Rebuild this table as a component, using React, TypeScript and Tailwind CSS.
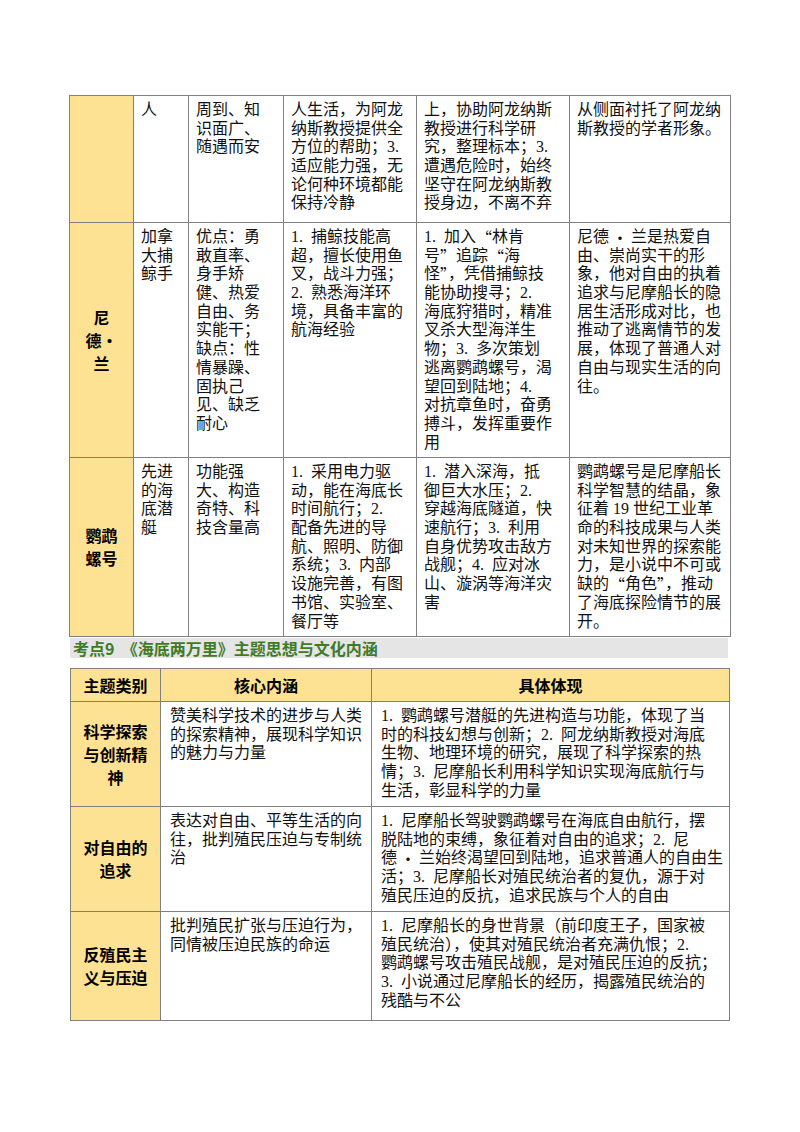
import React from "react";

// 人物形象表（续）与主题思想表
const body = '"Liberation Serif", "Noto Sans CJK SC", serif';
const heavy = '"Noto Sans CJK SC", sans-serif';

type Row = { label: string[]; cells: string[][]; h: string };

const characterRows: Row[] = [
  {
    label: [],
    h: "h-[127px]",
    cells: [
      ["人"],
      ["周到、知", "识面广、", "随遇而安"],
      ["人生活，为阿龙", "纳斯教授提供全", "方位的帮助；3.", "适应能力强，无", "论何种环境都能", "保持冷静"],
      ["上，协助阿龙纳斯", "教授进行科学研", "究，整理标本；3.", "遭遇危险时，始终", "坚守在阿龙纳斯教", "授身边，不离不弃"],
      ["从侧面衬托了阿龙纳", "斯教授的学者形象。"],
    ],
  },
  {
    label: ["尼", "德·", "兰"],
    h: "h-[235px]",
    cells: [
      ["加拿", "大捕", "鲸手"],
      ["优点：勇", "敢直率、", "身手矫", "健、热爱", "自由、务", "实能干；", "缺点：性", "情暴躁、", "固执己", "见、缺乏", "耐心"],
      ["1. 捕鲸技能高", "超，擅长使用鱼", "叉，战斗力强；", "2. 熟悉海洋环", "境，具备丰富的", "航海经验"],
      [
        "1. 加入“林肯",
        "号”追踪“海",
        "怪”，凭借捕鲸技",
        "能协助搜寻；2.",
        "海底狩猎时，精准",
        "叉杀大型海洋生",
        "物；3. 多次策划",
        "逃离鹦鹉螺号，渴",
        "望回到陆地；4.",
        "对抗章鱼时，奋勇",
        "搏斗，发挥重要作",
        "用",
      ],
      ["尼德·兰是热爱自", "由、崇尚实干的形", "象，他对自由的执着", "追求与尼摩船长的隐", "居生活形成对比，也", "推动了逃离情节的发", "展，体现了普通人对", "自由与现实生活的向", "往。"],
    ],
  },
  {
    label: ["鹦鹉", "螺号"],
    h: "h-[179px]",
    cells: [
      ["先进", "的海", "底潜", "艇"],
      ["功能强", "大、构造", "奇特、科", "技含量高"],
      ["1. 采用电力驱", "动，能在海底长", "时间航行；2.", "配备先进的导", "航、照明、防御", "系统；3. 内部", "设施完善，有图", "书馆、实验室、", "餐厅等"],
      ["1. 潜入深海，抵", "御巨大水压；2.", "穿越海底隧道，快", "速航行；3. 利用", "自身优势攻击敌方", "战舰；4. 应对冰", "山、漩涡等海洋灾", "害"],
      ["鹦鹉螺号是尼摩船长", "科学智慧的结晶，象", "征着 19 世纪工业革", "命的科技成果与人类", "对未知世界的探索能", "力，是小说中不可或", "缺的“角色”，推动", "了海底探险情节的展", "开。"],
    ],
  },
];

const themeRows: Row[] = [
  {
    label: ["科学探索", "与创新精", "神"],
    h: "h-[105px]",
    cells: [
      ["赞美科学技术的进步与人类", "的探索精神，展现科学知识", "的魅力与力量"],
      [
        "1. 鹦鹉螺号潜艇的先进构造与功能，体现了当",
        "时的科技幻想与创新；2. 阿龙纳斯教授对海底",
        "生物、地理环境的研究，展现了科学探索的热",
        "情；3. 尼摩船长利用科学知识实现海底航行与",
        "生活，彰显科学的力量",
      ],
    ],
  },
  {
    label: ["对自由的", "追求"],
    h: "h-[105px]",
    cells: [
      ["表达对自由、平等生活的向", "往，批判殖民压迫与专制统", "治"],
      [
        "1. 尼摩船长驾驶鹦鹉螺号在海底自由航行，摆",
        "脱陆地的束缚，象征着对自由的追求；2. 尼",
        "德·兰始终渴望回到陆地，追求普通人的自由生",
        "活；3. 尼摩船长对殖民统治者的复仇，源于对",
        "殖民压迫的反抗，追求民族与个人的自由",
      ],
    ],
  },
  {
    label: ["反殖民主", "义与压迫"],
    h: "h-[109px]",
    cells: [
      ["批判殖民扩张与压迫行为，", "同情被压迫民族的命运"],
      [
        "1. 尼摩船长的身世背景（前印度王子，国家被",
        "殖民统治），使其对殖民统治者充满仇恨；2.",
        "鹦鹉螺号攻击殖民战舰，是对殖民压迫的反抗；",
        "3. 小说通过尼摩船长的经历，揭露殖民统治的",
        "残酷与不公",
      ],
    ],
  },
];

// quotes and the middle dot take the CJK font so they sit full width
function Line({ text }: { text: string }) {
  const parts = text.replace(/(\d\.) /g, "$1\u2002").split(/([“”·])/);
  return (
    <span className="block h-[18.7px] whitespace-pre">
      {parts.map((p, i) =>
        /^[“”·]$/.test(p) ? (
          <span
            key={i}
            style={{ fontFamily: heavy }}
            className={`align-top leading-[18.7px] ${p === "·" ? "px-[3px]" : ""}`}
          >
            {p}
          </span>
        ) : (
          p
        ),
      )}
    </span>
  );
}

function LabelCell({ lines }: { lines: string[] }) {
  return (
    <td
      className="border border-[#808080] bg-[#fee294] align-middle text-center text-[16px] leading-[23px] font-bold text-black"
      style={{ fontFamily: heavy }}
    >
      {lines.map((l, i) => (
        <span key={i} className="block whitespace-nowrap">
          {l}
        </span>
      ))}
    </td>
  );
}

function BodyCell({ lines, pad }: { lines: string[]; pad: string }) {
  return (
    <td className={`border border-[#808080] align-top pt-[5px] ${pad} text-[16px] leading-[18.7px] text-[#111]`}>
      {lines.map((l, i) => (
        <Line key={i} text={l} />
      ))}
    </td>
  );
}

export default function App() {
  return (
    <div className="min-h-[1132px] w-[800px] bg-white pt-[95px] pl-[69px]" style={{ fontFamily: body }}>
      <table className="w-[661px] table-fixed border-collapse">
        <colgroup>
          <col className="w-[64px]" />
          <col className="w-[55px]" />
          <col className="w-[95px]" />
          <col className="w-[133px]" />
          <col className="w-[153px]" />
          <col className="w-[161px]" />
        </colgroup>
        <tbody>
          {characterRows.map((row, i) => (
            <tr key={i} className={row.h}>
              <LabelCell lines={row.label} />
              {row.cells.map((c, j) => (
                <BodyCell key={j} lines={c} pad="pl-[7px]" />
              ))}
            </tr>
          ))}
        </tbody>
      </table>

      <div className="mt-px ml-px flex h-[20px] w-[658px] items-center bg-[#e5e5e5] pl-[3px]">
        <span
          className="text-[16px] leading-[20px] font-bold text-[#3f7b27] whitespace-pre"
          style={{ fontFamily: heavy }}
        >
          {"考点9  《海底两万里》主题思想与文化内涵"}
        </span>
      </div>

      <table className="mt-[10px] ml-px w-[659px] table-fixed border-collapse">
        <colgroup>
          <col className="w-[90px]" />
          <col className="w-[211px]" />
          <col className="w-[358px]" />
        </colgroup>
        <thead>
          <tr className="h-[33px]">
            {["主题类别", "核心内涵", "具体体现"].map((t) => (
              <th
                key={t}
                className="border border-[#808080] bg-[#fee294] text-center align-middle text-[16px] font-bold text-black"
                style={{ fontFamily: heavy }}
              >
                {t}
              </th>
            ))}
          </tr>
        </thead>
        <tbody>
          {themeRows.map((row, i) => (
            <tr key={i} className={row.h}>
              <LabelCell lines={row.label} />
              {row.cells.map((c, j) => (
                <BodyCell key={j} lines={c} pad="pl-[9px]" />
              ))}
            </tr>
          ))}
        </tbody>
      </table>
    </div>
  );
}
